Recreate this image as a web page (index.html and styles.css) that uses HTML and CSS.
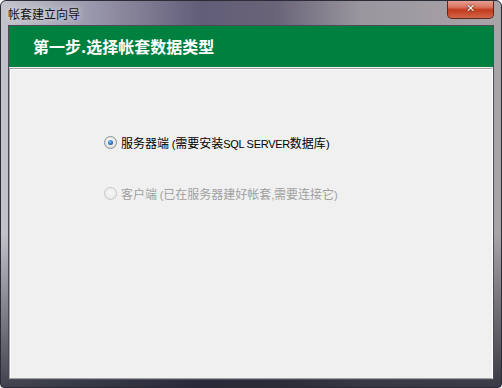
FILE: index.html
```html
<!DOCTYPE html>
<html lang="zh-CN">
<head>
    <meta charset="UTF-8">
    <title>帐套建立向导</title>
    <link rel="stylesheet" href="styles.css">
</head>
<body>
    <div class="window">
        <div class="titlebar">
            <span class="title">帐套建立向导</span>
            <div class="close-btn">&#x2715;</div>
        </div>
        <div class="client">
            <div class="banner">第一步.选择帐套数据类型</div>
            <div class="panel">
                <label class="option">
                    <span class="radio checked"></span>
                    <span class="option-text">服务器端<span class="latin"> (</span>需要安装<span class="latin">SQL SERVER</span>数据库<span class="latin">)</span></span>
                </label>
                <label class="option disabled">
                    <span class="radio"></span>
                    <span class="option-text">客户端<span class="latin"> (</span>已在服务器建好帐套<span class="latin">,</span>需要连接它<span class="latin">)</span></span>
                </label>
            </div>
            <div class="footer"></div>
        </div>
    </div>
</body>
</html>
```

FILE: styles.css
```css
body {
    margin: 0;
    background: #ffffff;
    font-family: "Liberation Sans", "Noto Sans CJK SC", sans-serif;
    font-size: 12px;
}
.window {
    width: 502px;
    height: 388px;
    box-sizing: border-box;
    border: 1px solid #2a2d38;
    border-radius: 6px 6px 4px 4px;
    background:
        linear-gradient(180deg, rgba(20,22,34,0) 0%, rgba(20,22,34,0) 60%, rgba(20,22,34,0.75) 100%),
        linear-gradient(90deg, #c4c4cc 0%, #9a98ac 18%, #625d78 40%, #6a6478 55%, #9a969e 72%, #a8a4a8 100%);
    display: flex;
    flex-direction: column;
    overflow: hidden;
}
.titlebar {
    height: 27px;
    display: flex;
    align-items: flex-start;
    justify-content: space-between;
    padding-left: 7px;
    padding-right: 7px;
}
.title {
    color: #111111;
    margin-top: 6px;
    line-height: 16px;
    text-shadow: 0 0 6px rgba(255,255,255,0.9);
}
.close-btn {
    width: 45px;
    height: 18px;
    margin-top: -1px;
    border: 1px solid #5a2a22;
    border-top: none;
    border-radius: 0 0 5px 5px;
    background: linear-gradient(180deg, #e9a698 0%, #d8735e 40%, #c23a1c 55%, #d2664a 100%);
    color: #ffffff;
    font-family: "DejaVu Sans", sans-serif;
    font-weight: bold;
    font-size: 11px;
    line-height: 17px;
    text-align: center;
    text-shadow: 0 0 2px #4a1a10, 0 0 1px #4a1a10;
}
.client {
    flex: 1;
    margin: 0 7px 7px 7px;
    border: 1px solid #4a4c5a;
    background: #f0f0f0;
    display: flex;
    flex-direction: column;
}
.banner {
    height: 41px;
    background: #00803f;
    color: #ffffff;
    font-family: "Noto Sans CJK SC", sans-serif;
    font-weight: bold;
    font-size: 16px;
    line-height: 40px;
    padding-left: 24px;
}
.panel {
    height: 244px;
    margin-top: 1px;
    border-top: 1px solid #a0a0a0;
    border-left: 1px solid #a0a0a0;
    border-bottom: 1px solid #a0a0a0;
    border-right: 1px solid #ffffff;
    box-shadow: inset 1px 1px 0 #ffffff;
    padding: 65px 0 0 94px;
    display: flex;
    flex-direction: column;
    gap: 35px;
}
.option {
    display: flex;
    align-items: center;
    height: 16px;
    gap: 4px;
    color: #000000;
}
.option.disabled {
    color: #a0a0a0;
}
.option-text {
    font-family: "Noto Sans CJK SC", sans-serif;
    font-size: 12px;
}
.latin {
    font-family: "Liberation Sans", sans-serif;
    font-size: 11px;
    letter-spacing: -0.3px;
}
.radio {
    width: 11px;
    height: 11px;
    border: 1px solid #8a8f98;
    border-radius: 50%;
    background: radial-gradient(circle at 50% 40%, #ffffff 0%, #e6e6e6 60%, #d0d0d0 100%);
    display: flex;
    align-items: center;
    justify-content: center;
}
.radio.checked::after {
    content: "";
    width: 5px;
    height: 5px;
    border-radius: 50%;
    background: radial-gradient(circle at 40% 35%, #7ec0f0 0%, #2a6ab0 60%, #1a3a70 100%);
}
.option.disabled .radio {
    border-color: #c8c8c8;
    background: radial-gradient(circle at 50% 40%, #f8f8f8 0%, #e4e4e4 100%);
}
.footer {
    flex: 1;
}
```
